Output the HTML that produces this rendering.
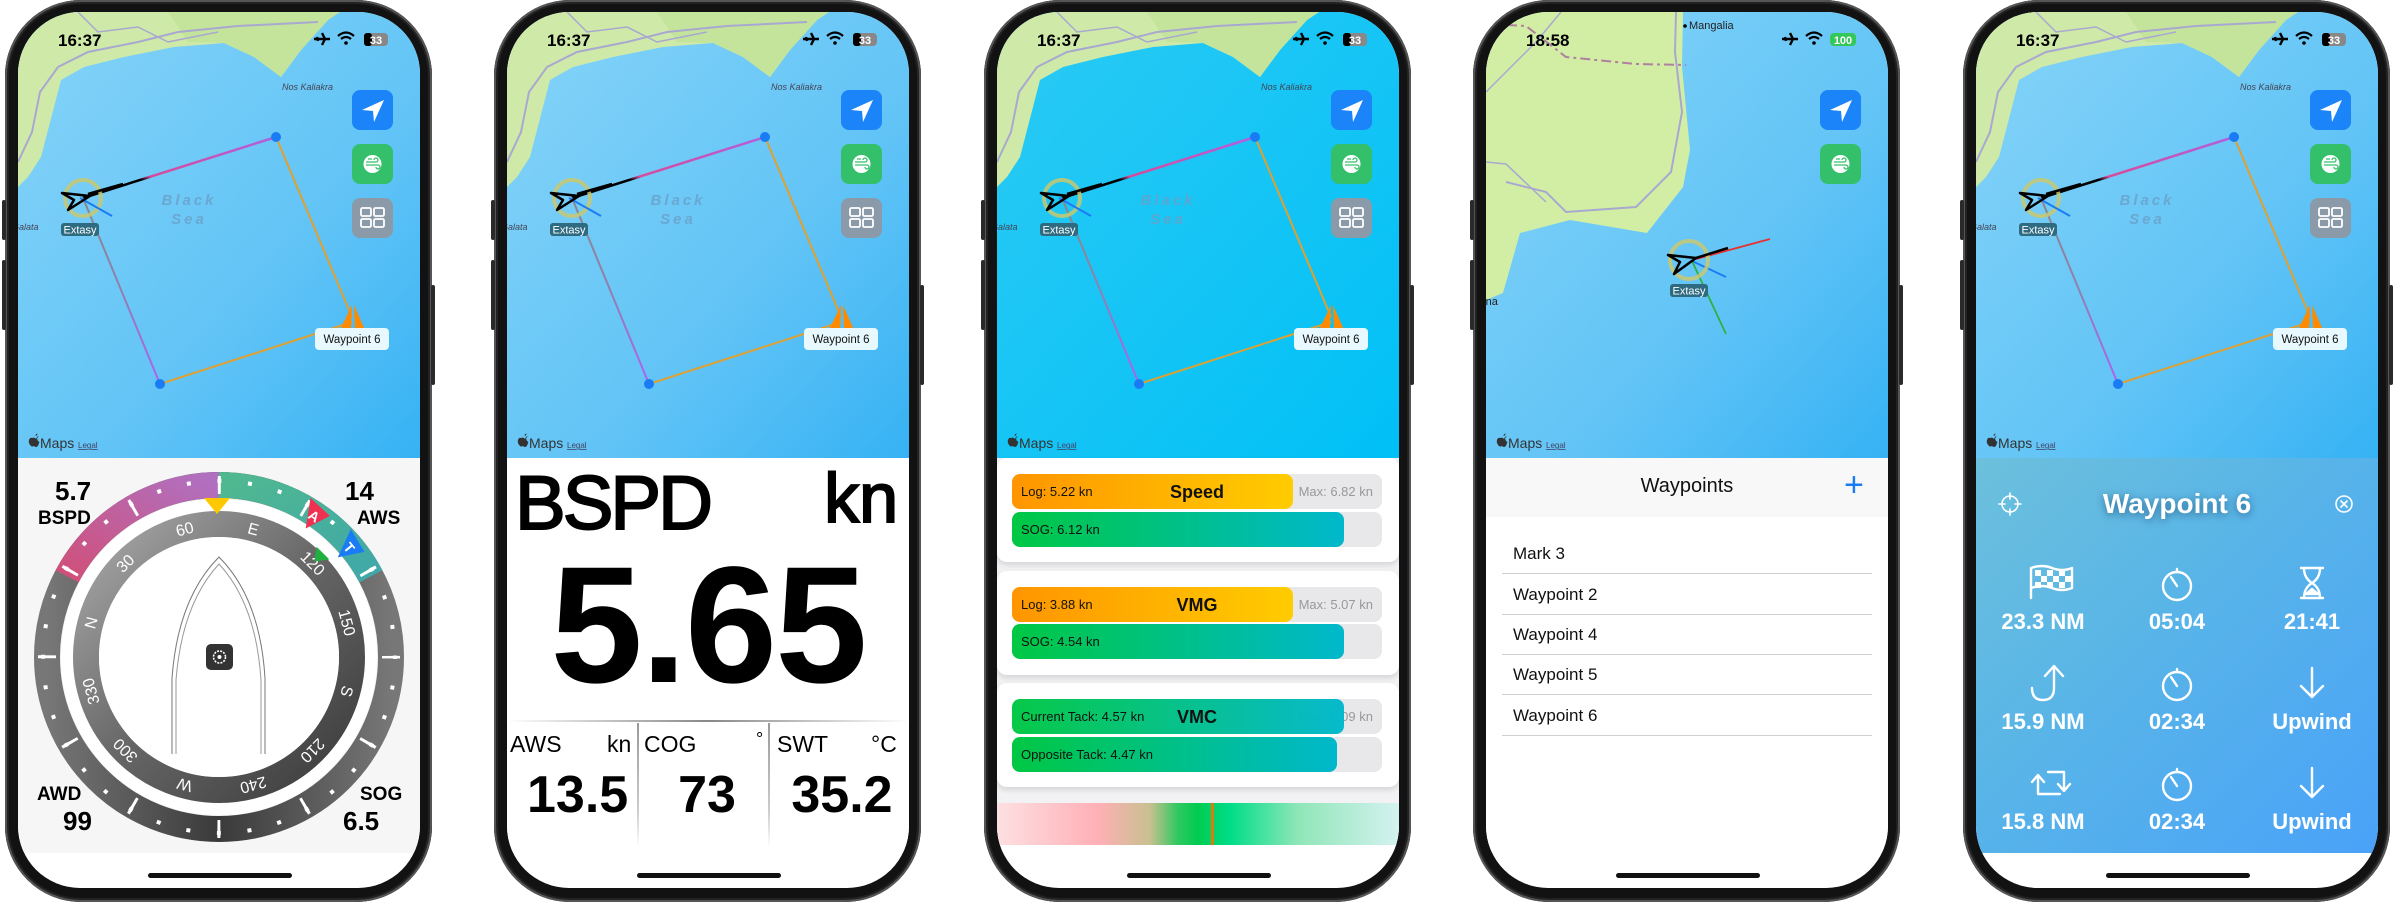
<!DOCTYPE html>
<html><head><meta charset="utf-8"><style>
*{margin:0;padding:0;box-sizing:border-box}
body{width:2394px;height:902px;background:#fff;position:relative;overflow:hidden;font-family:"Liberation Sans",sans-serif}
.ph{position:absolute;top:0;width:427px;height:902px;border-radius:76px;background:#121212;box-shadow:inset 0 0 0 2px #555,inset 0 0 0 4px #222}
.btn{position:absolute;background:#2a2a2a;border-radius:2px}
.scr{position:absolute;left:13px;top:12px;width:402px;height:876px;border-radius:62px;overflow:hidden;background:#fff}
.map{position:absolute;left:0;top:0}
.time{position:absolute;left:40px;top:19px;font-weight:bold;font-size:17px;color:#000}
.panel{position:absolute;left:0;top:446px;width:402px;height:395px}
.home{position:absolute;left:130px;top:861px;width:144px;height:5px;border-radius:3px;background:#111}
.a{position:absolute;white-space:nowrap;line-height:1}
.card{position:absolute;left:0;width:402px;height:104px;background:#fff;border-radius:10px;box-shadow:0 3px 6px rgba(0,0,0,.12)}
.bar{position:absolute;left:15px;width:370px;height:35px;background:#e8e8ea;border-radius:8px}
.fill{position:absolute;left:0;top:0;height:35px;border-radius:8px}
.o{background:linear-gradient(90deg,#ff9500,#ffcc00)}
.g{background:linear-gradient(90deg,#00c843,#00b8cc)}
.bl{position:absolute;left:9px;top:10px;font-size:13px;color:#111}
.bm{position:absolute;right:9px;top:10px;font-size:13px;color:#999}
.bt{position:absolute;left:0;width:370px;text-align:center;top:8px;font-size:18px;font-weight:bold;color:#111}
.wv{position:absolute;width:140px;text-align:center;color:#fff;font-weight:bold;font-size:22px}
.row{position:absolute;left:27px;font-size:17px;color:#111}
.sep{position:absolute;left:16px;width:370px;height:1px;background:#d0d0d0}
</style></head><body>

<svg width="0" height="0" style="position:absolute">
<defs>
<linearGradient id="w1" x1="0" y1="0" x2="1" y2="1"><stop offset="0" stop-color="#86d4f8"/><stop offset=".6" stop-color="#62c4f6"/><stop offset="1" stop-color="#36b2f4"/></linearGradient>
<linearGradient id="w3" x1="0" y1="0" x2="1" y2="1"><stop offset="0" stop-color="#2ccaf4"/><stop offset="1" stop-color="#00c0f6"/></linearGradient>
<linearGradient id="r1" x1="0" y1="1" x2="1" y2="0"><stop offset="0" stop-color="#000"/><stop offset=".3" stop-color="#000"/><stop offset=".35" stop-color="#d84a9a"/><stop offset="1" stop-color="#b060e0"/></linearGradient>
<linearGradient id="r2" x1="0" y1="1" x2="0" y2="0"><stop offset="0" stop-color="#b060f0"/><stop offset=".5" stop-color="#9080b0"/><stop offset="1" stop-color="#888"/></linearGradient>
<linearGradient id="pk" x1="0" y1="1" x2="1" y2="0"><stop offset="0" stop-color="#d0507a"/><stop offset="1" stop-color="#b070c0"/></linearGradient>
<linearGradient id="gr" x1="0" y1="0" x2="1" y2="1"><stop offset="0" stop-color="#50b890"/><stop offset="1" stop-color="#40a8a8"/></linearGradient>
<linearGradient id="ob" x1="0" y1="0" x2="1" y2="0"><stop offset="0" stop-color="#777"/><stop offset=".5" stop-color="#3a3a3a"/><stop offset="1" stop-color="#777"/></linearGradient>
<linearGradient id="ib" x1="0" y1="0" x2="1" y2="1"><stop offset="0" stop-color="#aaa"/><stop offset=".5" stop-color="#666"/><stop offset="1" stop-color="#3a3a3a"/></linearGradient>
<g id="maps">
<path d="M14,426 q3,-1 4,1 q1,-3 3,-3 q-3,2 -1,5 q2,1 1,2 q-1,4 -3,4 q-1,0 -2,-1 q-2,1 -3,0 q-3,-3 -2,-6 q1,-3 3,-2z M17.5,424 q0,-2 2,-2.5 q0,2 -2,2.5z" fill="#333"/>
<text x="22" y="436" font-size="14" fill="#333">Maps</text>
<text x="60" y="436" font-size="8" fill="#446" text-decoration="underline">Legal</text>
</g>
<g id="mapbase">
<polygon points="0,0 322,0 310,8 283,38 263,65 236,45 206,31 156,35 106,45 66,55 43,68 36,95 23,145 10,165 0,175" fill="#cfe9a8"/>
<polygon points="150,0 322,0 310,8 283,38 263,65 236,45 206,31 170,30" fill="#c4e49c"/>
<polyline points="0,150 14,120 22,80 40,55 70,40 120,30 160,20 220,14 300,10" fill="none" stroke="#a8a8d0" stroke-width="2"/>
<polyline points="60,0 80,20 120,15 150,30 200,20" fill="none" stroke="#a8a8d0" stroke-width="1.5"/>
<text x="264" y="78" font-size="9" font-style="italic" fill="#445">Nos Kaliakra</text>
<text x="171" y="193" font-size="15" font-style="italic" font-weight="bold" fill="#6aa0c8" text-anchor="middle" letter-spacing="3" opacity=".8">Black</text>
<text x="171" y="212" font-size="15" font-style="italic" font-weight="bold" fill="#6aa0c8" text-anchor="middle" letter-spacing="3" opacity=".8">Sea</text>
<text x="-6" y="218" font-size="9" font-style="italic" fill="#445">Galata</text>
<line x1="65" y1="186" x2="258" y2="125" stroke="url(#r1)" stroke-width="2.5"/>
<line x1="258" y1="125" x2="334" y2="305" stroke="#e0a030" stroke-width="2"/>
<line x1="334" y1="310" x2="142" y2="372" stroke="#e0a030" stroke-width="2"/>
<line x1="142" y1="372" x2="65" y2="186" stroke="url(#r2)" stroke-width="2"/>
<circle cx="258" cy="125" r="5" fill="#1a7cf5"/>
<circle cx="142" cy="372" r="5" fill="#1a7cf5"/>
<circle cx="65" cy="186" r="18" fill="none" stroke="#c8c870" stroke-width="4" opacity=".85"/>
<line x1="62" y1="186" x2="94" y2="204" stroke="#1a7cf5" stroke-width="2"/>
<polyline points="70,182 105,172" stroke="#000" stroke-width="2.5"/>
<path d="M44,181 L72,184 L50,198 L56,188 Z" fill="none" stroke="#000" stroke-width="2.5" stroke-linejoin="round"/>
<rect x="43" y="211" width="38" height="13" rx="3" fill="#2e6a80"/>
<text x="62" y="221.5" font-size="11" fill="#fff" text-anchor="middle">Extasy</text>
<path d="M334,293 L322,318 L333,318 Z" fill="#ff8a00"/><path d="M336,293 L347,318 L337,318 Z" fill="#ff8a00"/>
<rect x="297" y="316" width="74" height="22" rx="4" fill="#e8f8ff"/>
<text x="334" y="331" font-size="11.5" fill="#111" text-anchor="middle">Waypoint 6</text>
<use href="#maps"/>
</g>
<g id="status">
<path d="M296,27 L312,27 M304,21 L307,27 L304,33 M299,25 L300,29" stroke="#000" stroke-width="2.4" fill="none"/>
<path d="M320,24 Q328,17 336,24 M323,27 Q328,23 333,27" stroke="#000" stroke-width="2.2" fill="none"/><circle cx="328" cy="31" r="1.8"/>
<rect x="346" y="21" width="24" height="13" rx="4" fill="#888"/><rect x="346" y="21" width="8" height="13" rx="3" fill="#000"/>
<text x="358" y="32" font-size="11" font-weight="bold" fill="#fff" text-anchor="middle">33</text>
</g>
<g id="btns">
<rect x="334" y="78" width="41" height="40" rx="8" fill="#1a84f8"/>
<path d="M344,98 L366,88 L356,110 L355,99 Z" fill="#fff"/>
<rect x="334" y="132" width="41" height="40" rx="8" fill="#34c06a"/>
<circle cx="354.5" cy="152" r="9" fill="#fff"/>
<path d="M348,150 h10 a2,2 0 1 0 -2,-2 M348,153 h12 a2,2 0 1 1 -2,2 M350,147 h4" stroke="#34c06a" stroke-width="1.3" fill="none"/>
</g>
<g id="grid">
<rect x="334" y="186" width="41" height="40" rx="8" fill="#8a9aa8"/>
<g fill="none" stroke="#fff" stroke-width="1.8"><rect x="343" y="196" width="10" height="8" rx="1.5"/><rect x="356" y="196" width="10" height="8" rx="1.5"/><rect x="343" y="207" width="10" height="8" rx="1.5"/><rect x="356" y="207" width="10" height="8" rx="1.5"/></g>
</g>
</defs>
</svg>

<!-- PHONE 1 -->
<div class="ph" style="left:5px">
<div class="btn" style="left:-3px;top:200px;width:4px;height:40px"></div>
<div class="btn" style="left:-3px;top:260px;width:4px;height:70px"></div>
<div class="btn" style="left:426px;top:285px;width:4px;height:100px"></div>
<div class="scr">
<svg class="map" width="402" height="446"><rect width="402" height="446" fill="url(#w1)"/><use href="#mapbase"/><use href="#btns"/><use href="#grid"/><use href="#status"/></svg>
<div class="time">16:37</div>
<div class="panel" style="background:#f6f6f6">
<svg width="402" height="395" style="position:absolute;left:0;top:0">
<circle cx="201" cy="199" r="172" fill="none" stroke="url(#ob)" stroke-width="26"/>
<path d="M49.1,118.3 A172,172 0 0 1 201,27" fill="none" stroke="url(#pk)" stroke-width="26"/>
<path d="M201,27 A172,172 0 0 1 352.9,118.3" fill="none" stroke="url(#gr)" stroke-width="26"/>
<circle cx="201" cy="199" r="176" fill="none" stroke="#fff" stroke-width="4" stroke-dasharray="4 26.72" stroke-dashoffset="2"/>
<circle cx="201" cy="199" r="172" fill="none" stroke="#fff" stroke-width="18" stroke-dasharray="3 87.06" stroke-dashoffset="1.5"/>
<circle cx="201" cy="199" r="152" fill="none" stroke="#fff" stroke-width="12"/>
<circle cx="201" cy="199" r="133" fill="none" stroke="url(#ib)" stroke-width="26"/>
<circle cx="201" cy="199" r="120" fill="#fff"/>
<g fill="#fff" font-size="16" text-anchor="middle">
<text x="201" y="72" transform="rotate(-15 201 199)">60</text>
<text x="201" y="72" transform="rotate(15 201 199)">E</text>
<text x="201" y="72" transform="rotate(45 201 199)">120</text>
<text x="201" y="72" transform="rotate(75 201 199)">150</text>
<text x="201" y="72" transform="rotate(105 201 199)">S</text>
<text x="201" y="72" transform="rotate(135 201 199)">210</text>
<text x="201" y="72" transform="rotate(165 201 199)">240</text>
<text x="201" y="72" transform="rotate(195 201 199)">W</text>
<text x="201" y="72" transform="rotate(225 201 199)">300</text>
<text x="201" y="72" transform="rotate(255 201 199)">330</text>
<text x="201" y="72" transform="rotate(285 201 199)">N</text>
<text x="201" y="72" transform="rotate(315 201 199)">30</text>
</g>
<path d="M186,40 L212,40 L199,56 Z" fill="#ffc800"/>
<g transform="rotate(34 201 199)"><path d="M188,16 L214,20 L201,44 Z" fill="#f03050"/><text x="201" y="34" fill="#fff" font-size="14" font-weight="bold" text-anchor="middle">A</text></g>
<g transform="rotate(50 201 199)"><path d="M188,16 L214,20 L201,44 Z" fill="#1a7cf5"/><text x="201" y="34" fill="#fff" font-size="14" font-weight="bold" text-anchor="middle">T</text></g>
<g transform="rotate(45 201 199)"><path d="M192,52 L210,52 L201,64 Z" fill="#20b040"/></g>
<path d="M154,296 L154,220 Q160,140 201,99 Q242,140 247,220 L247,296" fill="none" stroke="#777" stroke-width="1"/>
<path d="M158,296 L158,222 Q164,146 201,106 Q238,146 243,222 L243,296" fill="none" stroke="#999" stroke-width="1"/>
<rect x="188" y="186" width="27" height="26" rx="5" fill="#333"/>
<circle cx="201.5" cy="199" r="6" fill="none" stroke="#fff" stroke-width="1.6" stroke-dasharray="2 1.2"/>
<circle cx="201.5" cy="199" r="2" fill="#fff"/>
</svg>
<div class="a" style="left:37px;top:20px;font-size:26px;font-weight:bold">5.7</div>
<div class="a" style="left:20px;top:51px;font-size:19px;font-weight:bold">BSPD</div>
<div class="a" style="left:327px;top:20px;font-size:26px;font-weight:bold">14</div>
<div class="a" style="left:339px;top:51px;font-size:19px;font-weight:bold">AWS</div>
<div class="a" style="left:19px;top:327px;font-size:19px;font-weight:bold">AWD</div>
<div class="a" style="left:45px;top:350px;font-size:26px;font-weight:bold">99</div>
<div class="a" style="left:342px;top:327px;font-size:19px;font-weight:bold">SOG</div>
<div class="a" style="left:325px;top:350px;font-size:26px;font-weight:bold">6.5</div>
</div>
<div class="home"></div>
</div></div>

<!-- PHONE 2 -->
<div class="ph" style="left:494px">
<div class="btn" style="left:-3px;top:200px;width:4px;height:40px"></div>
<div class="btn" style="left:-3px;top:260px;width:4px;height:70px"></div>
<div class="btn" style="left:426px;top:285px;width:4px;height:100px"></div>
<div class="scr">
<svg class="map" width="402" height="446"><rect width="402" height="446" fill="url(#w1)"/><use href="#mapbase"/><use href="#btns"/><use href="#grid"/><use href="#status"/></svg>
<div class="time">16:37</div>
<div class="panel" style="background:#fff">
<div class="a" style="left:8px;top:8px;font-size:76px;-webkit-text-stroke:2px #000;letter-spacing:-3px">BSPD</div>
<div class="a" style="right:11px;top:5px;font-size:70px;-webkit-text-stroke:2px #000">kn</div>
<div class="a" style="left:0;width:402px;text-align:center;top:85px;font-size:166px;font-weight:bold;letter-spacing:-2px">5.65</div>
<div style="position:absolute;left:0;top:262px;width:402px;height:2px;background:linear-gradient(90deg,transparent,#888 50%,transparent)"></div>
<div style="position:absolute;left:130px;top:265px;width:2px;height:125px;background:linear-gradient(#999,#ccc 70%,transparent)"></div>
<div style="position:absolute;left:261px;top:265px;width:2px;height:125px;background:linear-gradient(#999,#ccc 70%,transparent)"></div>
<div class="a" style="left:3px;top:275px;font-size:23px">AWS</div>
<div class="a" style="left:100px;top:275px;font-size:23px">kn</div>
<div class="a" style="left:137px;top:275px;font-size:23px">COG</div>
<div class="a" style="left:249px;top:272px;font-size:18px">°</div>
<div class="a" style="left:270px;top:275px;font-size:23px">SWT</div>
<div class="a" style="left:364px;top:275px;font-size:23px">°C</div>
<div class="a" style="left:20px;width:95px;text-align:center;top:311px;font-size:52px;font-weight:bold">13.5</div>
<div class="a" style="left:150px;width:100px;text-align:center;top:311px;font-size:52px;font-weight:bold">73</div>
<div class="a" style="left:280px;width:110px;text-align:center;top:311px;font-size:52px;font-weight:bold">35.2</div>
</div>
<div class="home"></div>
</div></div>

<!-- PHONE 3 -->
<div class="ph" style="left:984px">
<div class="btn" style="left:-3px;top:200px;width:4px;height:40px"></div>
<div class="btn" style="left:-3px;top:260px;width:4px;height:70px"></div>
<div class="btn" style="left:426px;top:285px;width:4px;height:100px"></div>
<div class="scr">
<svg class="map" width="402" height="446"><rect width="402" height="446" fill="url(#w3)"/><use href="#mapbase"/><use href="#btns"/><use href="#grid"/><use href="#status"/></svg>
<div class="time">16:37</div>
<div class="panel" style="background:#f2f2f4">
<div class="card" style="top:0">
<div class="bar" style="top:16px"><div class="fill o" style="width:281px"></div><div class="bl">Log: 5.22 kn</div><div class="bm">Max: 6.82 kn</div><div class="bt">Speed</div></div>
<div class="bar" style="top:54px"><div class="fill g" style="width:332px"></div><div class="bl">SOG: 6.12 kn</div></div>
</div>
<div class="card" style="top:113px">
<div class="bar" style="top:16px"><div class="fill o" style="width:281px"></div><div class="bl">Log: 3.88 kn</div><div class="bm">Max: 5.07 kn</div><div class="bt">VMG</div></div>
<div class="bar" style="top:53px"><div class="fill g" style="width:332px"></div><div class="bl">SOG: 4.54 kn</div></div>
</div>
<div class="card" style="top:225px">
<div class="bar" style="top:16px"><div class="bm">Max: 5.09 kn</div><div class="fill g" style="width:332px;opacity:.97"></div><div class="bl">Current Tack: 4.57 kn</div><div class="bt">VMC</div></div>
<div class="bar" style="top:54px"><div class="fill g" style="width:325px"></div><div class="bl">Opposite Tack: 4.47 kn</div></div>
</div>
<div style="position:absolute;left:0;top:345px;width:402px;height:42px;background:linear-gradient(90deg,#fde0e2,#ffb0b6 25%,#c8c090 38%,#30c860 45%,#00cc50 50%,#00dd88 58%,#90e6b8 75%,#d4f2f0 100%)"></div>
<div style="position:absolute;left:214px;top:345px;width:3px;height:42px;background:#e07a10"></div>
<div style="position:absolute;left:0;top:387px;width:402px;height:10px;background:#fff"></div>
</div>
<div class="home"></div>
</div></div>

<!-- PHONE 4 -->
<div class="ph" style="left:1473px">
<div class="btn" style="left:-3px;top:200px;width:4px;height:40px"></div>
<div class="btn" style="left:-3px;top:260px;width:4px;height:70px"></div>
<div class="btn" style="left:426px;top:285px;width:4px;height:100px"></div>
<div class="scr">
<svg class="map" width="402" height="446">
<rect width="402" height="446" fill="url(#w1)"/>
<polygon points="0,0 197,0 196,55 204,138 197,175 161,221 84,208 34,221 17,281 0,288" fill="#d2eea4"/>
<polyline points="0,12 40,14 80,45 150,52 200,53" fill="none" stroke="#b080a0" stroke-width="2" stroke-dasharray="10 4 3 4"/>
<polyline points="20,170 60,180 80,200 150,195 185,160 196,100 189,40 190,0" fill="none" stroke="#a8a8d0" stroke-width="2"/>
<polyline points="0,80 20,60 50,30 75,0" fill="none" stroke="#a8a8d0" stroke-width="1.5"/>
<polyline points="0,150 20,152 60,190" fill="none" stroke="#a8a8d0" stroke-width="1.5"/>
<circle cx="199" cy="14" r="1.8" fill="#000"/><text x="203" y="17" font-size="11" fill="#222">Mangalia</text>
<text x="-4" y="293" font-size="11" fill="#222">rna</text>
<line x1="210" y1="247" x2="284" y2="227" stroke="#e83030" stroke-width="1.8"/>
<line x1="206" y1="249" x2="240" y2="265" stroke="#1a7cf5" stroke-width="1.8"/>
<line x1="206" y1="249" x2="240" y2="322" stroke="#30b040" stroke-width="1.8"/>
<circle cx="203" cy="248" r="19" fill="none" stroke="#c8c870" stroke-width="4" opacity=".85"/>
<polyline points="210,246 242,236" stroke="#000" stroke-width="2.5"/>
<path d="M182,243 L210,246 L188,262 L194,250 Z" fill="none" stroke="#000" stroke-width="2.5" stroke-linejoin="round"/>
<rect x="184" y="272" width="38" height="13" rx="3" fill="#2e6a80"/>
<text x="203" y="282.5" font-size="11" fill="#fff" text-anchor="middle">Extasy</text>
<use href="#maps"/>
<use href="#btns"/>
<path d="M296,27 L312,27 M304,21 L307,27 L304,33 M299,25 L300,29" stroke="#000" stroke-width="2.4" fill="none"/>
<path d="M320,24 Q328,17 336,24 M323,27 Q328,23 333,27" stroke="#000" stroke-width="2.2" fill="none"/><circle cx="328" cy="31" r="1.8"/>
<rect x="344" y="21" width="26" height="13" rx="4" fill="#34c759"/>
<text x="357" y="32" font-size="11" font-weight="bold" fill="#fff" text-anchor="middle">100</text>
</svg>
<div class="time">18:58</div>
<div class="panel" style="background:#fff">
<div style="position:absolute;left:0;top:0;width:402px;height:59px;background:#f8f8f8"></div>
<div class="a" style="left:0;width:402px;text-align:center;top:18px;font-size:20px;color:#111">Waypoints</div>
<div class="a" style="left:358px;top:10px;font-size:34px;color:#1a7cf5;font-weight:300">+</div>
<div class="row" style="top:86px">Mark 3</div><div class="sep" style="top:115px"></div>
<div class="row" style="top:127px">Waypoint 2</div><div class="sep" style="top:156px"></div>
<div class="row" style="top:167px">Waypoint 4</div><div class="sep" style="top:196px"></div>
<div class="row" style="top:207px">Waypoint 5</div><div class="sep" style="top:236px"></div>
<div class="row" style="top:248px">Waypoint 6</div><div class="sep" style="top:277px"></div>
</div>
<div class="home"></div>
</div></div>

<!-- PHONE 5 -->
<div class="ph" style="left:1963px">
<div class="btn" style="left:-3px;top:200px;width:4px;height:40px"></div>
<div class="btn" style="left:-3px;top:260px;width:4px;height:70px"></div>
<div class="btn" style="left:426px;top:285px;width:4px;height:100px"></div>
<div class="scr">
<svg class="map" width="402" height="446"><rect width="402" height="446" fill="url(#w1)"/><use href="#mapbase"/><use href="#btns"/><use href="#grid"/><use href="#status"/></svg>
<div class="time">16:37</div>
<div class="panel" style="background:linear-gradient(135deg,#6cc0dc 0%,#58b4e8 45%,#4aa2f8 100%)">
<svg width="402" height="395" style="position:absolute;left:0;top:0" fill="none" stroke="#fff" stroke-width="2.4" stroke-linecap="round" stroke-linejoin="round">
<g stroke-width="1.6"><circle cx="34" cy="46" r="8"/><path d="M34,35 v6 M34,51 v6 M23,46 h6 M39,46 h6"/></g>
<g stroke-width="1.6"><circle cx="368" cy="46" r="8"/><path d="M365,43 l6,6 M371,43 l-6,6"/></g>
<path d="M55,140 L55,110 Q66,106 76,110 Q86,114 96,110 L96,130 Q86,134 76,130 Q66,126 55,130" stroke-width="2.4"/>
<g fill="#fff" stroke="none"><rect x="59" y="112" width="6" height="6"/><rect x="71" y="112" width="6" height="6"/><rect x="83" y="112" width="6" height="6"/><rect x="65" y="118" width="6" height="6"/><rect x="77" y="118" width="6" height="6"/><rect x="89" y="118" width="6" height="6"/><rect x="59" y="124" width="6" height="6"/><rect x="71" y="124" width="6" height="6"/><rect x="83" y="124" width="6" height="6"/></g>
<g><circle cx="201" cy="128" r="14"/><path d="M201,114 v-3 M195,119 l6,9"/></g>
<path d="M325,110 h22 M325,140 h22 M328,110 q0,10 8,15 q8,5 8,15 M344,110 q0,10 -8,15 q-8,5 -8,15"/>
<path d="M330,136 l6,-5 l6,5 z" fill="#fff"/>
<g><circle cx="201" cy="228" r="14"/><path d="M201,214 v-3 M195,219 l6,9"/></g>
<g><circle cx="201" cy="328" r="14"/><path d="M201,314 v-3 M195,319 l6,9"/></g>
<path d="M56,230 q0,12 11,12 q11,0 11,-12 v-20 M69,218 l9,-10 l9,10"/>
<path d="M336,210 v28 M325,228 l11,11 l11,-11"/>
<path d="M336,310 v28 M325,328 l11,11 l11,-11"/>
<path d="M62,318 v18 h22 M56,324 l6,-7 l6,7 M72,314 h16 v18 M82,326 l6,7 l6,-7"/>
</svg>
<div class="a" style="left:0;width:402px;text-align:center;top:32px;font-size:28px;font-weight:bold;color:#fff;text-shadow:0 2px 8px rgba(0,40,80,.5)">Waypoint 6</div>
<div class="wv" style="left:-3px;top:151px">23.3 NM</div>
<div class="wv" style="left:131px;top:151px">05:04</div>
<div class="wv" style="left:266px;top:151px">21:41</div>
<div class="wv" style="left:-3px;top:251px">15.9 NM</div>
<div class="wv" style="left:131px;top:251px">02:34</div>
<div class="wv" style="left:266px;top:251px">Upwind</div>
<div class="wv" style="left:-3px;top:351px">15.8 NM</div>
<div class="wv" style="left:131px;top:351px">02:34</div>
<div class="wv" style="left:266px;top:351px">Upwind</div>
</div>
<div class="home"></div>
</div></div>

</body></html>
